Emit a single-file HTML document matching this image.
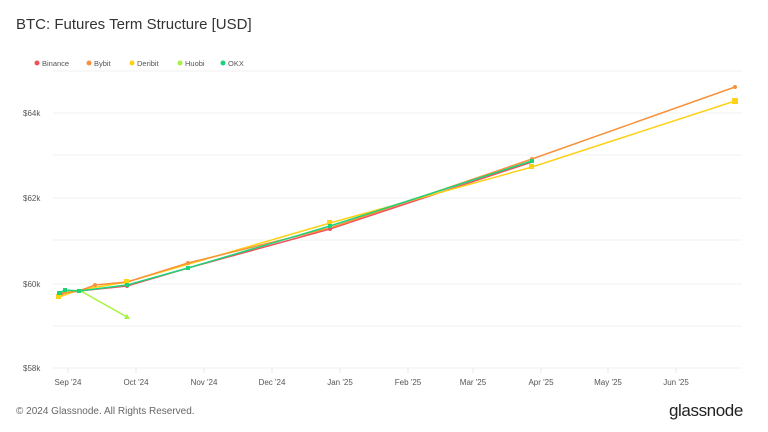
<!DOCTYPE html>
<html><head><meta charset="utf-8"><style>
body{margin:0;width:768px;height:432px;background:#fff;font-family:"Liberation Sans",sans-serif;overflow:hidden;position:relative}
.t{position:absolute;left:16px;top:16px;font-size:15px;color:#333}
.f{position:absolute;left:16px;top:406px;font-size:10px;color:#666}
.g{position:absolute;left:669px;top:401px;font-size:17px;color:#222;letter-spacing:-0.4px}
</style></head><body>
<div class="t">BTC: Futures Term Structure [USD]</div>
<svg width="768" height="432" style="position:absolute;left:0;top:0" font-family="Liberation Sans, sans-serif">
<g font-size="7.5" fill="#555">
<circle cx="37" cy="63" r="2.5" fill="#f0505a"/><text x="42" y="66">Binance</text>
<circle cx="89" cy="63" r="2.5" fill="#f7923a"/><text x="94" y="66">Bybit</text>
<circle cx="132" cy="63" r="2.5" fill="#fcd116"/><text x="137" y="66">Deribit</text>
<circle cx="180" cy="63" r="2.5" fill="#a4f43f"/><text x="185" y="66">Huobi</text>
<circle cx="223" cy="63" r="2.5" fill="#1dd37a"/><text x="228" y="66">OKX</text>
</g>
<g stroke="#f2f2f2" stroke-width="1">
<line x1="53" x2="742" y1="71" y2="71"/><line x1="53" x2="742" y1="113" y2="113"/><line x1="53" x2="742" y1="155" y2="155"/><line x1="53" x2="742" y1="198" y2="198"/><line x1="53" x2="742" y1="240" y2="240"/><line x1="53" x2="742" y1="284" y2="284"/><line x1="53" x2="742" y1="326" y2="326"/><line x1="53" x2="742" y1="368" y2="368"/>
<g stroke="#e8e8e8"><line x1="68" x2="68" y1="368" y2="373"/><line x1="136" x2="136" y1="368" y2="373"/><line x1="204" x2="204" y1="368" y2="373"/><line x1="272" x2="272" y1="368" y2="373"/><line x1="340" x2="340" y1="368" y2="373"/><line x1="408" x2="408" y1="368" y2="373"/><line x1="473" x2="473" y1="368" y2="373"/><line x1="541" x2="541" y1="368" y2="373"/><line x1="608" x2="608" y1="368" y2="373"/><line x1="676" x2="676" y1="368" y2="373"/></g>
</g>
<g font-size="8" fill="#555">
<text x="23" y="116">$64k</text><text x="23" y="201">$62k</text><text x="23" y="287">$60k</text><text x="23" y="371">$58k</text>
<g text-anchor="middle"><text x="68" y="385">Sep '24</text><text x="136" y="385">Oct '24</text><text x="204" y="385">Nov '24</text><text x="272" y="385">Dec '24</text><text x="340" y="385">Jan '25</text><text x="408" y="385">Feb '25</text><text x="473" y="385">Mar '25</text><text x="541" y="385">Apr '25</text><text x="608" y="385">May '25</text><text x="676" y="385">Jun '25</text></g>
</g>
<g fill="none" stroke-width="1.5">
<polyline stroke="#a4f43f" points="59,293 79,290 127,317"/>
<polyline stroke="#f0505a" points="59,294 79,291 127,286 188,268 330,229 532,162"/>
<polyline stroke="#fcd116" points="59,297 79,290 127,282 330,223 532,167 735,101"/>
<polyline stroke="#f7923a" points="59,296 65,293 79,291 95,285 127,282 188,263 330,228 532,159 735,87"/>
<polyline stroke="#1dd37a" points="59,293 65,290 79,291 127,285 188,268 330,226 532,161"/>
</g>
<g>
<path d="M127 314l3 5h-6z" fill="#a4f43f"/>
<rect x="56" y="294" width="5" height="5" fill="#fcd116"/><rect x="124" y="279" width="5" height="5" fill="#fcd116"/><rect x="327" y="220" width="5" height="5" fill="#fcd116"/><rect x="529" y="164" width="5" height="5" fill="#fcd116"/><rect x="732" y="98" width="6" height="6" fill="#fcd116"/>
<g fill="#f7923a"><circle cx="95" cy="285" r="2"/><circle cx="188" cy="263" r="2"/><circle cx="532" cy="159" r="2"/><circle cx="735" cy="87" r="2"/></g>
<g fill="#f0505a"><circle cx="330" cy="229" r="2"/><circle cx="127" cy="286" r="2"/></g>
<g fill="#1dd37a"><rect x="57" y="291" width="4" height="4"/><rect x="63" y="288" width="4" height="4"/><rect x="77" y="289" width="4" height="4"/><rect x="125" y="283" width="4" height="4"/><rect x="186" y="266" width="4" height="4"/><rect x="328" y="224" width="4" height="4"/><rect x="530" y="159" width="4" height="4"/></g>
</g>
</svg>
<div class="f">© 2024 Glassnode. All Rights Reserved.</div>
<div class="g">glassnode</div>
</body></html>
